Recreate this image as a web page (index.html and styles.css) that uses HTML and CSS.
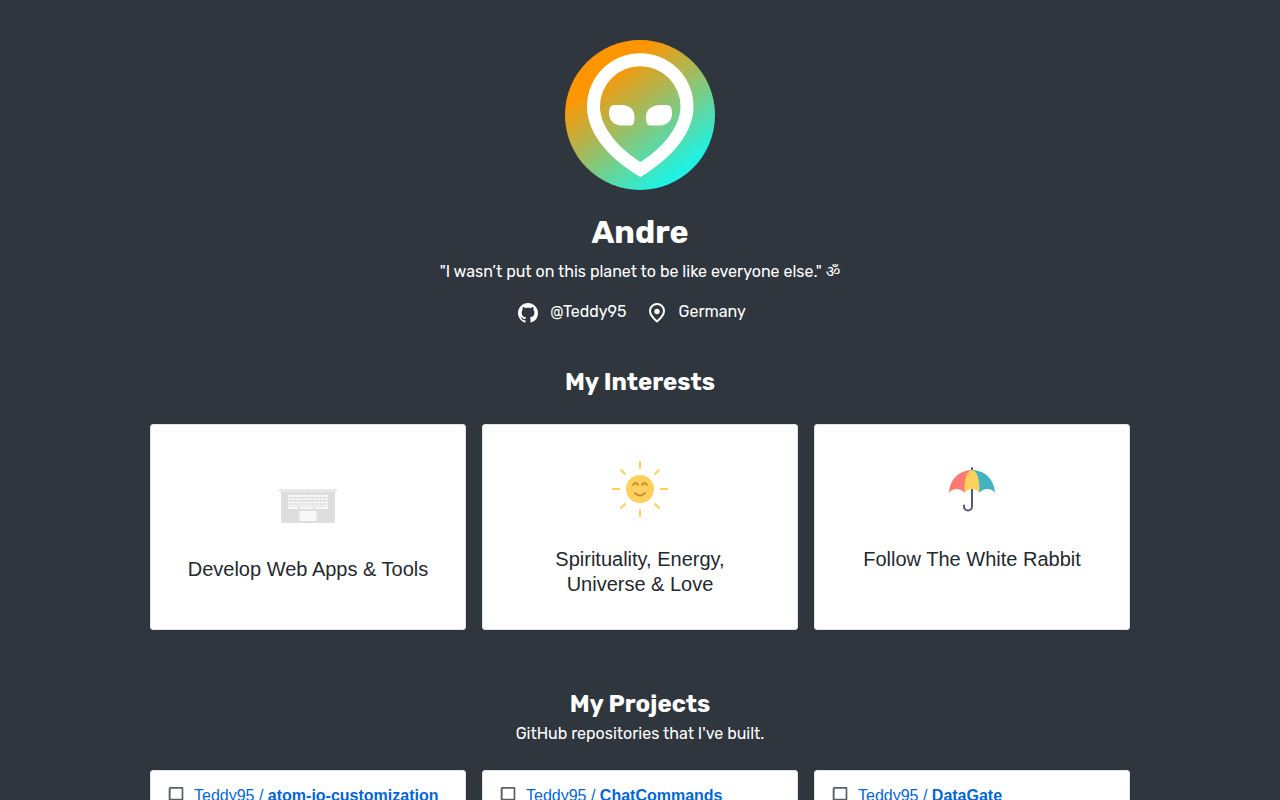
FILE: index.html
```html
<!DOCTYPE html>
<html lang="en">
<head>
    <meta charset="UTF-8">
    <meta name="viewport" content="width=device-width, initial-scale=1.0">
    <title>Andre</title>
    <link rel="stylesheet" href="styles.css">
</head>
<body>
    <!-- Shared icons -->
    <svg class="icon-defs" aria-hidden="true">
        <symbol id="repo" viewBox="0 0 16 16">
            <path fill-rule="evenodd" d="M3 0h10.500q1 0 1 1v12q0 1-1 1H9v-1.500h4V12H3.500v.5H5V14H3q-1.500 0-1.500-1.500v-11Q1.500 0 3 0zM3.200 1.600v8.900H13V1.600z"/>
        </symbol>
    </svg>

    <div class="container">
        <!-- Profile -->
        <header class="profile">
            <svg class="avatar" viewBox="0 0 150 150" role="img" aria-label="Andre">
                <defs>
                    <linearGradient id="glow" gradientUnits="userSpaceOnUse" x1="31" y1="42" x2="104" y2="139">
                        <stop offset="0" stop-color="#ff9500"/>
                        <stop offset="1" stop-color="#1ff2e2"/>
                    </linearGradient>
                </defs>
                <circle cx="75" cy="75" r="75" fill="url(#glow)"/>
                <path fill="#fff" fill-rule="evenodd" d="M75.500 137C48 121 22 96 22 66.500a53.250 53.250 0 01106.500 0C128.500 96 102 121 75.500 137zM75.500 122C96 109 115.500 88 115.500 66.500a40.250 40.250 0 00-80.500 0C35 88 55 109 75.500 122z"/>
                <path fill="#fff" d="M50 65h6c9 0 13.500 5 13.500 11.500 0 6-1 9-4 9H57C49 85.500 44 80 44 73.500c0-6 1.500-8.500 6-8.500zM101.500 65h-6C86.500 65 81 70 81 76.500c0 6 1 9 4 9h9.500c8 0 12.500-5.500 12.500-12 0-6-1.500-8.500-5.500-8.500z"/>
            </svg>
            <h1>Andre</h1>
            <p class="quote">"I wasn’t put on this planet to be like everyone else." ॐ</p>
            <div class="meta">
                <a class="meta-item" href="https://github.com/Teddy95">
                    <svg class="meta-icon" viewBox="0 0 16 16" aria-hidden="true">
                        <path fill-rule="evenodd" d="M8 0C3.580 0 0 3.580 0 8c0 3.540 2.290 6.530 5.470 7.590.4.070.55-.17.55-.38 0-.19-.01-.82-.01-1.490-2.010.37-2.530-.49-2.690-.94-.09-.23-.48-.94-.82-1.130-.28-.15-.68-.52-.01-.53.63-.01 1.080.58 1.230.82.72 1.210 1.870.87 2.330.66.070-.52.28-.87.51-1.070-1.780-.2-3.640-.89-3.640-3.950 0-.87.31-1.590.82-2.150-.08-.2-.36-1.020.08-2.120 0 0 .67-.21 2.200.82.64-.18 1.320-.27 2-.27s1.360.09 2 .27c1.530-1.040 2.200-.82 2.200-.82.44 1.100.16 1.920.08 2.120.51.56.82 1.270.82 2.150 0 3.070-1.870 3.750-3.650 3.950.29.25.54.73.54 1.480 0 1.070-.01 1.930-.01 2.200 0 .21.15.46.55.38A8.010 8.010 0 0016 8c0-4.420-3.580-8-8-8z"/>
                    </svg>
                    @Teddy95
                </a>
                <span class="meta-item">
                    <svg class="meta-icon" viewBox="0 0 20 20" aria-hidden="true">
                        <path fill="none" stroke="currentColor" stroke-width="2" stroke-linejoin="round" d="M10 18.500c-3.500-3-7-6.500-7-10.500a7 7 0 0114 0c0 4-3.500 7.500-7 10.500z"/>
                        <circle cx="10" cy="8.500" r="2.700"/>
                    </svg>
                    Germany
                </span>
            </div>
        </header>

        <!-- Interests -->
        <section class="interests">
            <h2>My Interests</h2>
            <div class="cards">
                <div class="card interest interest-short">
                    <svg class="interest-icon" viewBox="0 0 64 64" aria-hidden="true">
                        <path fill="#dedede" d="M5 19h54v29q0 2-2 2H7q-2 0-2-2z"/>
                        <path fill="#e8e8ec" d="M3 16h58v2q0 1-1 1H4q-1 0-1-1z"/>
                        <path fill="none" stroke="#fafafa" stroke-width="1.800" stroke-dasharray="3 .7" d="M12 23h40M12 29.500h40"/>
                        <path fill="none" stroke="#f6f6f6" stroke-width="1.800" stroke-dasharray="3.500 .600" d="M12 26.200h40M12 32.500h40"/>
                        <path fill="none" stroke="#fafafa" stroke-width="1.800" d="M12 35h10M24 35h13M39 35h13"/>
                        <path fill="#f8f8f8" d="M23.500 38h17v10h-17z"/>
                    </svg>
                    <h3>Develop Web Apps &amp; Tools</h3>
                </div>
                <div class="card interest">
                    <svg class="interest-icon" viewBox="0 0 64 64" aria-hidden="true">
                        <circle cx="32" cy="32" r="14" fill="#ffd05b"/>
                        <path fill="none" stroke="#ffd05b" stroke-width="2" d="M32 4v8M32 52v8M4 32h8M52 32h8M12.500 12.500l5 5M46.500 46.500l5 5M12.500 51.500l5-5M46.500 17.500l5-5"/>
                        <path fill="none" stroke="#cc8b3c" stroke-width="1.800" stroke-linecap="round" d="M25 28q2.500-4 5 0M34 28q2.500-4 5 0M27 36q5 5 10 0"/>
                    </svg>
                    <h3>Spirituality, Energy, Universe &amp; Love</h3>
                </div>
                <div class="card interest interest-top">
                    <svg class="interest-icon" viewBox="0 0 64 64" aria-hidden="true">
                        <path fill="none" stroke="#545871" stroke-width="2" stroke-linecap="round" d="M32 11v38.500a4 4 0 01-8 0v-1"/>
                        <path fill="#ff7a72" d="M32 13C20 13 9.500 22 9 36c3-5.500 12-5.500 15.500 0z"/>
                        <path fill="#43b3bf" d="M32 13c12 0 22.500 9 23 23-3-5.500-12-5.500-15.500 0z"/>
                        <path fill="#ffd05b" d="M32 13c-5 0-8 10-7.500 22.500q3-3.500 7.500-3.500t7.500 3.500C40 23 37 13 32 13z"/>
                        <path stroke="#545871" stroke-width="2" d="M32 32v10"/>
                    </svg>
                    <h3>Follow The White Rabbit</h3>
                </div>
            </div>
        </section>

        <!-- Projects -->
        <section class="projects">
            <h2>My Projects</h2>
            <p class="subtitle">GitHub repositories that I've built.</p>
            <div class="cards">
                <div class="card project">
                    <svg class="repo-icon" aria-hidden="true"><use href="#repo"/></svg>
                    <a href="https://github.com/Teddy95/atom-io-customization">Teddy95 / <strong>atom-io-customization</strong></a>
                </div>
                <div class="card project">
                    <svg class="repo-icon" aria-hidden="true"><use href="#repo"/></svg>
                    <a href="https://github.com/Teddy95/ChatCommands">Teddy95 / <strong>ChatCommands</strong></a>
                </div>
                <div class="card project">
                    <svg class="repo-icon" aria-hidden="true"><use href="#repo"/></svg>
                    <a href="https://github.com/Teddy95/DataGate">Teddy95 / <strong>DataGate</strong></a>
                </div>
            </div>
        </section>
    </div>
</body>
</html>
```

FILE: styles.css
```css
* {
    box-sizing: border-box;
}

body {
    margin: 0;
    background-color: #2f363d;
    color: #fff;
    font-family: Rubik, Inter, "Noto Sans", sans-serif;
    font-size: 16px;
    line-height: 24px;
}

h1, h2, h3, p {
    margin: 0;
}

.icon-defs {
    position: absolute;
    width: 0;
    height: 0;
}

.container {
    max-width: 1012px;
    margin: 0 auto;
    padding: 40px 16px;
}

/* Profile */
.profile {
    display: flex;
    flex-direction: column;
    align-items: center;
    text-align: center;
}

.avatar {
    width: 150px;
    height: 150px;
    margin-bottom: 22px;
}

h1 {
    font-size: 32px;
    line-height: 40px;
    margin-bottom: 8px;
}

.quote {
    margin-bottom: 16px;
}

.meta {
    display: flex;
    gap: 20px;
    padding-right: 16px;
}

.meta-item {
    display: flex;
    align-items: center;
    gap: 12px;
    color: inherit;
    text-decoration: none;
}

.meta-icon {
    width: 20px;
    height: 20px;
    margin-top: 2px;
    fill: currentColor;
}

/* Sections */
.interests {
    margin-top: 40px;
}

.projects {
    margin-top: 56px;
}

h2 {
    font-size: 24px;
    line-height: 36px;
    text-align: center;
}

.subtitle {
    text-align: center;
}

.cards {
    display: grid;
    grid-template-columns: repeat(3, 1fr);
    gap: 16px;
    margin-top: 24px;
}

.card {
    background-color: #fff;
    border: 1px solid #e1e4e8;
    border-radius: 3px;
    color: #24292e;
    font-family: "Liberation Sans", Arial, sans-serif;
}

/* Interest cards */
.interest {
    display: flex;
    flex-direction: column;
    align-items: center;
    justify-content: center;
    gap: 26px;
    padding: 32px;
    text-align: center;
}

.interest-short {
    gap: 20px;
}

.interest-top {
    justify-content: flex-start;
}

.interest-icon {
    width: 64px;
    height: 64px;
}

h3 {
    font-size: 20px;
    font-weight: 400;
    line-height: 25px;
}

/* Project cards */
.project {
    display: flex;
    gap: 9px;
    padding: 16px;
    line-height: 18px;
}

.project a {
    color: #0366d6;
    text-decoration: none;
}

.project a:hover {
    text-decoration: underline;
}

.repo-icon {
    flex: none;
    width: 18px;
    height: 18px;
    fill: #586069;
}

@media (max-width: 767px) {
    .cards {
        grid-template-columns: 1fr;
    }
}
```
